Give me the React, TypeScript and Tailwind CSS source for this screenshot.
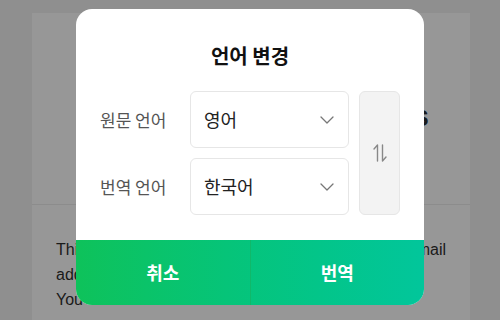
import React from "react";

const KR = { fontFamily: '"Noto Sans CJK KR", "Noto Sans", sans-serif' };

function Chevron() {
  return (
    <svg width="14" height="8" viewBox="0 0 14 8" fill="none" stroke="#777" strokeWidth="1.3" strokeLinecap="round" strokeLinejoin="round">
      <path d="M1 1l6 6 6-6" />
    </svg>
  );
}

function Swap() {
  return (
    <svg width="14" height="18" viewBox="0 0 14 18" fill="none" stroke="#888" strokeWidth="1.4" strokeLinecap="round" strokeLinejoin="round">
      <path d="M4.5 17V1L1 5" />
      <path d="M9.5 1v16L13 13" />
    </svg>
  );
}

function Select({ value }: { value: string }) {
  return (
    <div className="flex h-[57px] w-[159px] items-center justify-between rounded-[6px] border border-[#e6e6e6] bg-white pl-[13px] pr-[14px]">
      <span className="text-[18px] text-[#222]" style={KR}>{value}</span>
      <Chevron />
    </div>
  );
}

export default function App() {
  return (
    <div className="relative h-[320px] w-[500px] overflow-hidden bg-[#8f8f8f]" style={{ fontFamily: '"Liberation Sans", Arial, sans-serif' }}>
      {/* page behind */}
      <div className="ml-[32px] mt-[13px] h-[320px] w-[438px] bg-[#979797]">
        <div className="flex h-[192px] items-center justify-end border-b border-[#8c8c8c] pr-[41px] pt-[16px]">
          <span className="text-[29px] font-bold text-[#1a1a1a]">Terms of Services</span>
        </div>
        <div className="px-[24px] pt-[32px] text-[16px] leading-[25px] text-[#1a1a1a]">
          <div className="flex justify-between"><span>This</span><span>email</span></div>
          <div>address</div>
          <div>You can check the translated text here</div>
        </div>
      </div>

      {/* modal */}
      <div className="absolute left-[76px] top-[9px] flex h-[296px] w-[348px] flex-col overflow-hidden rounded-[16px] bg-white" style={KR}>
        <div className="flex flex-1 flex-col px-[24px]">
          <div className="mt-[33px] text-center text-[20px] font-bold leading-[28px] text-[#111]">언어 변경</div>
          <div className="mt-[21px] flex gap-[10px]">
            <div className="flex flex-col gap-[10px]">
              <div className="flex items-center">
                <span className="w-[90px] text-[17px] text-[#555]">원문 언어</span>
                <Select value="영어" />
              </div>
              <div className="flex items-center">
                <span className="w-[90px] text-[17px] text-[#555]">번역 언어</span>
                <Select value="한국어" />
              </div>
            </div>
            <div className="flex w-[41px] items-center justify-center rounded-[6px] border border-[#e6e6e6] bg-[#f3f3f3]">
              <Swap />
            </div>
          </div>
        </div>
        <div className="flex h-[65px] bg-gradient-to-r from-[#0ec25a] to-[#02c69b] text-[18px] font-bold text-white">
          <div className="flex flex-1 items-center justify-center border-r border-[#10b86a]">취소</div>
          <div className="flex flex-1 items-center justify-center">번역</div>
        </div>
      </div>
    </div>
  );
}
